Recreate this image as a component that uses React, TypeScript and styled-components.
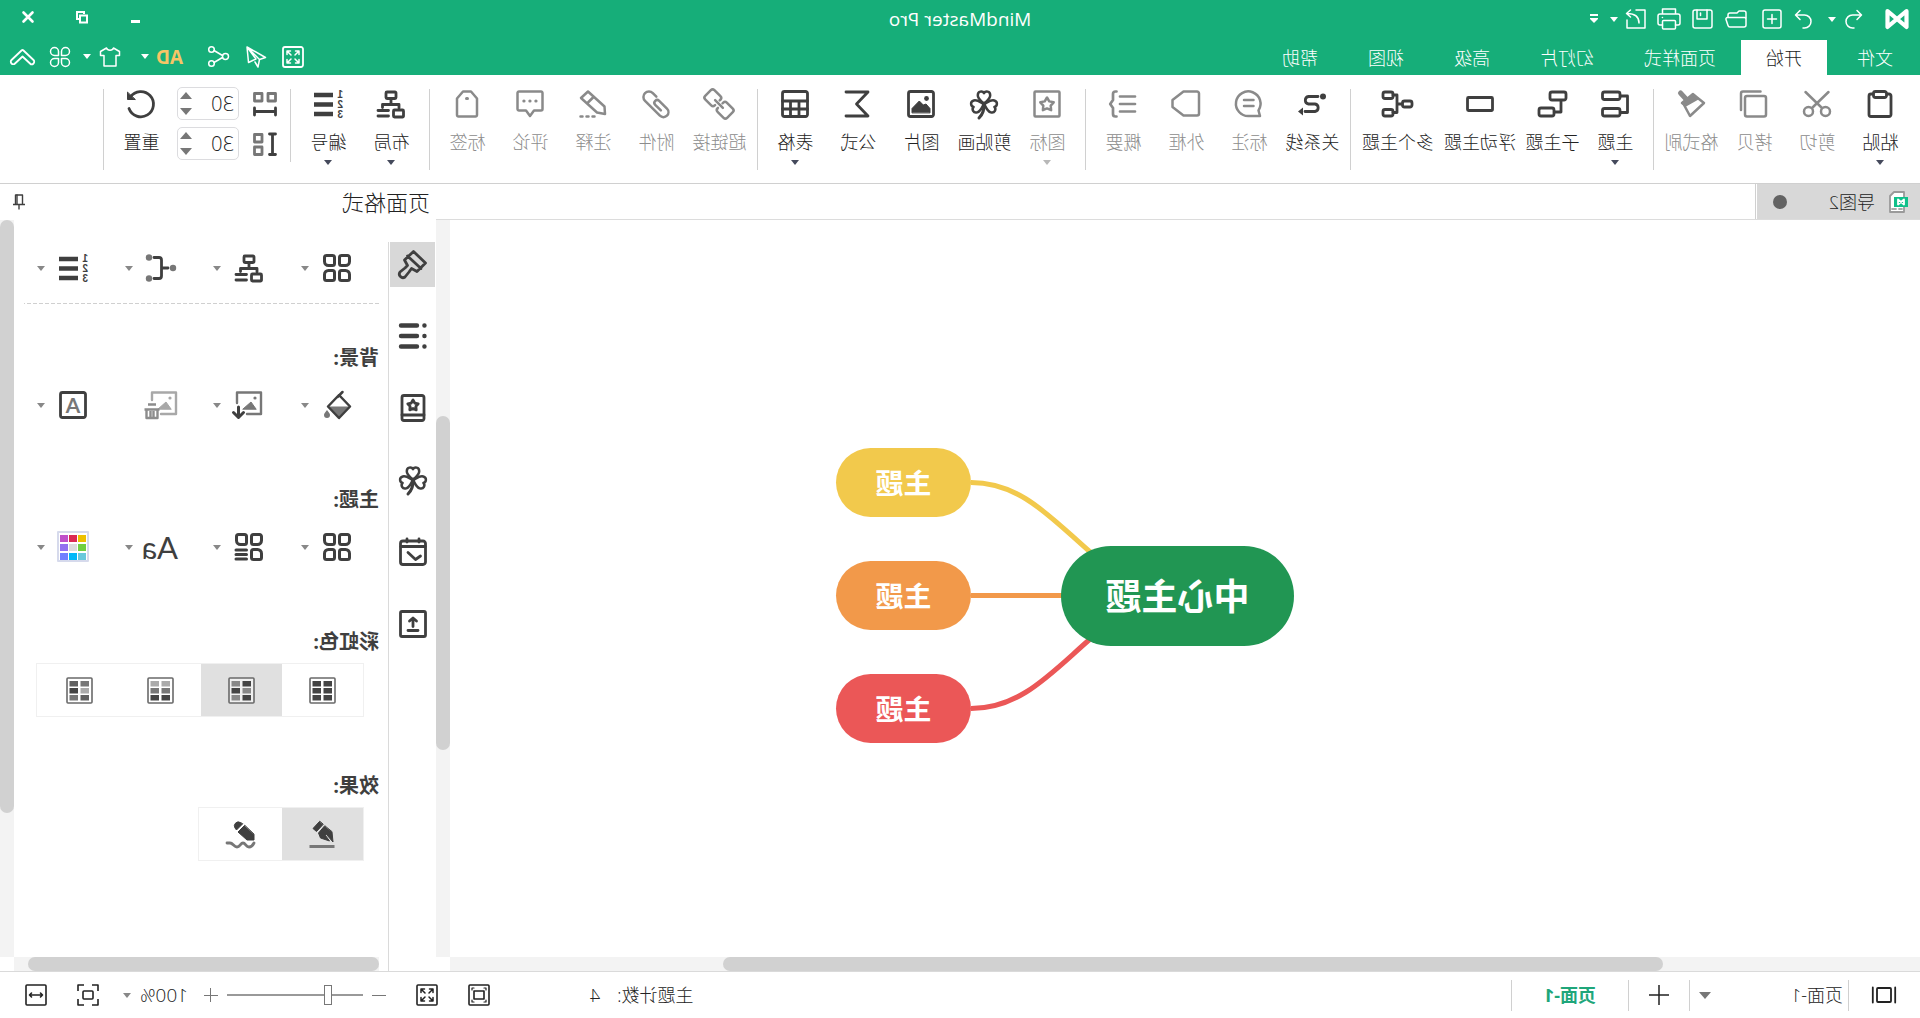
import React from 'react';
import styled, { createGlobalStyle, css } from 'styled-components';

const FONT = '"Open Sans", "Noto Sans CJK SC", sans-serif';
const C = {
  green: '#16ae79',
  ink: '#3f3f3f',
  mid: '#777777',
  faint: '#8a8a8a',
  line: '#d0d0d0',
  track: '#f3f3f3',
  thumb: '#d1d1d1',
};

const GlobalStyle = createGlobalStyle`
  * { box-sizing: border-box; }
  body { margin: 0; background: #fff; overflow: hidden; }
  button, input, select { font: inherit; color: inherit; margin: 0; padding: 0; border: 0; background: none; }
  button { cursor: pointer; }
`;

/* The whole window is shown reversed, left to right. */
const Shell = styled.div`
  display: flex;
  flex-direction: column;
  height: 100vh;
  transform: scaleX(-1);
  font-family: ${FONT};
  font-size: 18px;
  font-weight: 300;
  line-height: 24px;
  color: #222;
  background: #fff;
`;

/* ---------- shared parts ---------- */

const Svg = styled.svg`
  display: block;
  flex: none;
  overflow: visible;
  fill: none;
  stroke: currentColor;
  stroke-linecap: round;
  stroke-linejoin: round;
`;

type IconProps = { w?: number; h?: number; sw?: number; children: React.ReactNode };
const Icon = ({ w = 28, h, sw = 2.8, children }: IconProps) => (
  <Svg width={w} height={h ?? w} viewBox={`0 0 ${w} ${h ?? w}`} strokeWidth={sw} aria-hidden="true">
    {children}
  </Svg>
);

const Arrow = styled.i<{ $color?: string; $size?: number }>`
  display: block;
  flex: none;
  width: ${p => (p.$size ?? 4) * 2}px;
  border: ${p => p.$size ?? 4}px solid transparent;
  border-top: ${p => (p.$size ?? 4) + 1}px solid ${p => p.$color ?? 'currentColor'};
  border-bottom: 0;
`;

const IconButton = styled.button<{ $gap?: number }>`
  display: flex;
  align-items: center;
  flex: none;
  margin-left: ${p => p.$gap ?? 0}px;
`;

/* ---------- header ---------- */

const Header = styled.header`
  flex: none;
  background: ${C.green};
  color: #fff;
`;

const TitleBar = styled.div`
  display: grid;
  grid-template-columns: 1fr auto 1fr;
  align-items: center;
  height: 40px;
  padding-bottom: 2px;
`;

const QuickAccess = styled.div`
  display: flex;
  align-items: center;
  padding-left: 11px;
`;

const AppTitle = styled.h1`
  margin: 0;
  font-size: 19px;
  font-weight: 400;
  line-height: 24px;
`;

const WindowControls = styled.div`
  display: flex;
  justify-content: flex-end;
  padding: 0 1px 4px 0;
`;

const WindowButton = styled.button`
  display: flex;
  align-items: center;
  justify-content: center;
  width: 54px;
  height: 34px;
`;

const MenuRow = styled.div`
  display: flex;
  height: 35px;
`;

const FileButton = styled.button`
  width: 90px;
  margin-right: 3px;
`;

const MenuTab = styled.button<{ $active?: boolean }>`
  padding: 0 25px;
  ${p => p.$active && css`background: #fff; color: #222;`}
`;

const MenuTools = styled.div`
  display: flex;
  align-items: center;
  margin-left: auto;
  padding: 0 10px 2px 0;
`;

const AdLabel = styled.span`
  width: 27px;
  margin-right: 7px;
  color: #f7c566;
  font: 700 19px/24px "Open Sans", sans-serif;
`;

/* ---------- ribbon ---------- */

const Ribbon = styled.div`
  display: flex;
  align-items: flex-start;
  flex: none;
  height: 109px;
  padding: 14px 0 0 8px;
  border-bottom: 1px solid ${C.line};
`;

const Separator = styled.div<{ $h?: number }>`
  flex: none;
  width: 1px;
  height: ${p => p.$h ?? 81}px;
  margin: 0 6px;
  background: ${C.line};
`;

const RibbonButton = styled.button<{ $wide?: boolean }>`
  display: flex;
  flex-direction: column;
  align-items: center;
  flex: none;
  width: ${p => (p.$wide ? 82 : 63)}px;
  padding-top: 1px;
  white-space: nowrap;
  color: ${C.ink};
  &:disabled { color: ${C.faint}; cursor: default; }
`;

const RibbonLabel = styled.span`
  margin: 12px 0 6px;
  color: #222;
  button:disabled & { color: #8c8c8c; }
`;

const Spacing = styled.div`
  display: grid;
  grid-template-columns: 24px 62px;
  align-items: center;
  gap: 7px 14px;
  margin: -2px 0 0 7px;
  color: ${C.ink};
`;

const Spinner = styled.div`
  display: flex;
  align-items: center;
  height: 33px;
  border: 1px solid #dcdcdf;
  border-radius: 5px;
  input {
    width: 46px;
    padding-left: 4px;
    color: #222;
    font-size: 20px;
    line-height: 24px;
    outline: 0;
  }
`;

const SpinButtons = styled.div`
  display: flex;
  flex-direction: column;
  gap: 9px;
  color: ${C.mid};
  button { display: block; line-height: 0; }
`;

const ResetSlot = styled.div`
  padding: 0 0 0 4px;
  display: flex;
`;

/* ---------- work area ---------- */

const Workspace = styled.main`
  display: flex;
  flex: 1;
  min-height: 0;
`;

const DocArea = styled.section`
  display: flex;
  flex-direction: column;
  flex: 1;
  min-width: 0;
`;

const DocTabs = styled.div`
  display: flex;
  flex: none;
  height: 36px;
  border-bottom: 1px solid #dcdcdc;
`;

const DocTab = styled.button`
  display: flex;
  align-items: center;
  width: 163px;
  padding: 0 16px 0 12px;
  background: #d8d8d8;
`;

const DocName = styled.span`
  margin: 0 auto 0 13px;
`;

const Modified = styled.i`
  width: 14px;
  height: 14px;
  border-radius: 50%;
  background: #636363;
`;

const TabEdge = styled.i`
  width: 2px;
  border-right: 1px solid ${C.line};
`;

const CanvasRow = styled.div`
  display: flex;
  flex: 1;
  min-height: 0;
`;

const Canvas = styled.div`
  position: relative;
  flex: 1;
  overflow: hidden;
`;

const Track = styled.div<{ $row?: boolean; $split: [number, number, number] }>`
  display: grid;
  flex: none;
  background: ${C.track};
  ${p => {
    const parts = p.$split.map(n => `${n}fr`).join(' ');
    return p.$row
      ? css`height: 14px; grid-template-columns: ${parts};`
      : css`width: 14px; grid-template-rows: ${parts};`;
  }}
`;

const Thumb = styled.div<{ $row?: boolean }>`
  ${p => (p.$row ? 'grid-column: 2;' : 'grid-row: 2;')}
  border-radius: 7px;
  background: ${C.thumb};
`;

const HScrollRow = styled.div<{ $before?: number; $after?: number }>`
  flex: none;
  padding: 0 ${p => p.$after ?? 0}px 0 ${p => p.$before ?? 0}px;
`;

const Links = styled.svg`
  position: absolute;
  left: 626px;
  top: 220px;
  width: 460px;
  height: 310px;
  fill: none;
  stroke-width: 5;
`;

const Node = styled.div<{ $x: number; $y: number; $root?: boolean; $color: string }>`
  position: absolute;
  left: ${p => p.$x}px;
  top: ${p => p.$y}px;
  display: flex;
  align-items: center;
  justify-content: center;
  width: ${p => (p.$root ? 233 : 135)}px;
  height: ${p => (p.$root ? 100 : 69)}px;
  padding-top: ${p => (p.$root ? 2 : 0)}px;
  border-radius: 50px;
  background: ${p => p.$color};
  color: #fff;
  font-size: ${p => (p.$root ? 36 : 28)}px;
  font-weight: 700;
  line-height: 40px;
`;

/* ---------- format panel ---------- */

const Panel = styled.aside`
  display: flex;
  flex-direction: column;
  flex: none;
  width: 436px;
  color: ${C.ink};
`;

const PanelHead = styled.div`
  display: flex;
  align-items: center;
  justify-content: space-between;
  flex: none;
  height: 36px;
  padding: 0 13px 0 6px;
  h2 { margin: 0; color: #222; font-size: 22px; font-weight: inherit; line-height: 28px; }
`;

const PanelBody = styled.div`
  display: flex;
  flex: 1;
  min-height: 0;
`;

const Rail = styled.nav`
  display: flex;
  flex-direction: column;
  gap: 27px;
  flex: none;
  width: 48px;
  margin-top: 22px;
  padding-left: 1px;
  border-right: 1px solid #dadada;
`;

const RailButton = styled.button<{ $active?: boolean }>`
  display: flex;
  align-items: center;
  justify-content: center;
  width: 45px;
  height: 45px;
  padding: 0 1px 1px 0;
  background: ${p => (p.$active ? '#d8d8d8' : 'none')};
`;

const PanelMain = styled.div`
  display: flex;
  flex-direction: column;
  flex: 1;
`;

const PanelScroll = styled.div`
  display: flex;
  flex: 1;
  min-height: 0;
`;

const Settings = styled.div`
  flex: 1;
  overflow: hidden;
  padding: 34px 10px 0 9px;
`;

const ToolRow = styled.div`
  display: grid;
  grid-template-columns: repeat(4, 88px);
  height: 28px;
`;

const ToolButton = styled.button`
  display: flex;
  align-items: center;
  gap: 14px;
  padding-left: 28px;
  white-space: nowrap;
  &:disabled { cursor: default; }
`;

const Dashes = styled.div`
  height: 1px;
  margin: 21px 0 40px;
  background: repeating-linear-gradient(90deg, ${C.line} 0 4px, transparent 4px 6px);
`;

const Section = styled.section<{ $end: number }>`
  padding-bottom: ${p => p.$end}px;
`;

const Heading = styled.h3<{ $gap: number }>`
  margin: 0 0 ${p => p.$gap}px;
  font-size: 20px;
  font-weight: 700;
  line-height: 28px;
`;

const Segments = styled.div`
  display: inline-flex;
  vertical-align: top;
  margin-left: 15px;
  padding-right: 2px;
  border: 1px solid #f0f0f0;
`;

const Segment = styled.button<{ $active?: boolean }>`
  display: flex;
  align-items: center;
  justify-content: center;
  width: 81px;
  height: 52px;
  background: ${p => (p.$active ? '#e0e0e0' : 'none')};
`;

const FontSample = styled.span`
  width: 28px;
  margin-left: -3px;
  margin-right: 3px;
  font: 400 31px/28px Lato, sans-serif;
`;

/* ---------- status bar ---------- */

const StatusBar = styled.footer`
  display: flex;
  align-items: center;
  flex: none;
  height: 47px;
  padding-right: 25px;
  border-top: 1px solid #dadada;
`;

const StatusDivider = styled.i`
  width: 1px;
  height: 31px;
  background: ${C.line};
`;

const StatusCell = styled.button<{ $w: number; $active?: boolean }>`
  display: flex;
  align-items: center;
  justify-content: center;
  width: ${p => p.$w}px;
  height: 46px;
  ${p => p.$active && css`color: #1fa67a; font-weight: 700;`}
`;

const Picker = styled.label<{ $w: number; $pad?: number; $size?: number }>`
  display: flex;
  align-items: center;
  width: ${p => p.$w}px;
  padding: 0 ${p => p.$pad ?? 0}px 0 ${p => (p.$pad ? 5 : 0)}px;
  font-size: ${p => p.$size ?? 18}px;
  select { flex: 1; min-width: 0; appearance: none; outline: 0; }
`;

const Counter = styled.div`
  display: flex;
  gap: 17px;
  margin: 0 100px 0 auto;
`;

const Zoom = styled.div`
  display: flex;
  align-items: center;
  gap: 9px;
  margin: 0 16px 0 30px;
  color: ${C.mid};
`;

const Slider = styled.input`
  appearance: none;
  width: 136px;
  height: 20px;
  background: linear-gradient(#999, #999) center / 100% 2px no-repeat;
  &::-webkit-slider-thumb {
    appearance: none;
    width: 8px;
    height: 20px;
    border: 1px solid #777;
    background: #fff;
  }
`;

/* ---------- drawings ---------- */

const star = (cx: number, cy: number, r: number) =>
  Array.from({ length: 10 }, (_, i) => {
    const a = -Math.PI / 2 + (i * Math.PI) / 5;
    const k = i % 2 ? r * 0.55 : r;
    return `${(cx + k * Math.cos(a)).toFixed(1)},${(cy + k * Math.sin(a)).toFixed(1)}`;
  }).join(' ');

const heart = 'M0 0C-2-2.500-6.200-5-6.200-8.800C-6.200-13-1.500-13.500 0-10.800C1.500-13.500 6.200-13 6.200-8.800C6.200-5 2-2.500 0 0Z';

const Clover = () => (
  <Icon sw={2.5}>
    <path d={heart} transform="translate(14 14)" />
    <path d={heart} transform="translate(14 14) rotate(106)" />
    <path d={heart} transform="translate(14 14) rotate(-106)" />
    <path d="M14 13c-.5 6 1 11 5 15" strokeWidth="3" />
  </Icon>
);

const TreeIcon = () => (
  <Icon>
    <rect x="9" y="2" width="10" height="6.500" rx="1" />
    <path d="M14 9v5M6 18v-3.500h16.500v3M16.500 20.500H27M16.500 26H27" />
    <rect x="1.500" y="20" width="10" height="7" rx="1" />
  </Icon>
);

const NumberIcon = () => (
  <Icon sw={4.6}>
    <path d="M9 5h19M9 14.500h19M9 24h19" strokeLinecap="butt" />
    <g fill="currentColor" stroke="none" fontFamily="Liberation Sans Narrow, Liberation Sans, sans-serif" fontSize="10" fontWeight="700">
      <text x="-1" y="8">1</text>
      <text x="-1" y="18">2</text>
      <text x="-1" y="28">3</text>
    </g>
  </Icon>
);

const petals = [
  'M3.500 1.500h6a2 2 0 0 1 2 2v6a2 2 0 0 1-2 2h-4a4 4 0 0 1-4-4v-4a2 2 0 0 1 2-2z',
  'M18.500 1.500h6a2 2 0 0 1 2 2v4a4 4 0 0 1-4 4h-4a2 2 0 0 1-2-2v-6a2 2 0 0 1 2-2z',
  'M5.500 16.500h4a2 2 0 0 1 2 2v6a2 2 0 0 1-2 2h-6a2 2 0 0 1-2-2v-4a4 4 0 0 1 4-4z',
  'M18.500 16.500h4a4 4 0 0 1 4 4v4a2 2 0 0 1-2 2h-6a2 2 0 0 1-2-2v-6a2 2 0 0 1 2-2z',
];

const Petals = ({ list }: { list?: boolean }) => (
  <Icon sw={3}>
    {petals.filter((_, i) => !(list && i === 3)).map(d => <path key={d} d={d} />)}
    {list && <path d="M16.500 17H27M16.500 21.500H27M16.500 26H27" />}
  </Icon>
);

const mountain = '23,22.5 23,18.500 15.700,11 11.700,15 9,14 5,18.500 5,22.500';

const PictureCorner = ({ faint }: { faint?: boolean }) => (
  <Icon sw={2.4}>
    <g transform={faint ? 'translate(-3 0)' : undefined}>
      <g color={faint ? '#a8a8a8' : C.mid} stroke="currentColor">
        <path d={faint ? 'M17 23H2V1.500h24V9' : 'M16 23H2V1.500h24V12'} />
        <polygon points="7,18 12,11 20,18" fill="currentColor" strokeWidth="1" />
        <circle cx="8" cy="7" r="1.600" fill="currentColor" stroke="none" />
      </g>
      {faint ? (
        <g stroke="#8c8c8c" strokeLinecap="butt">
          <path d="M18.500 18.500h15M22 13.500h8M20.500 19v8h11v-8M24.500 20v6M27.500 20v6" />
        </g>
      ) : (
        <path d="M24.500 16v10M19.500 21.500l5 5 5-5" strokeWidth="3" />
      )}
    </g>
  </Icon>
);

const Grid = ({ cols }: { cols: [string[], string[]] }) => (
  <Icon w={27} sw={1.6}>
    <rect x="1" y="1" width="25" height="25" rx="1" stroke="#6a6a6a" fill="#fff" fillOpacity="0.500" />
    {cols.map((col, c) =>
      col.map((fill, r) => (
        <rect key={`${c}${r}`} x={4 + c * 11} y={4 + r * 7} width="8.500" height="5.500" fill={fill} stroke="none" />
      )),
    )}
  </Icon>
);

const palette = [
  ['#edc000', '#dc2a54', '#c04fc9'],
  ['#70d040', '#dcdcdc', '#9370f0'],
  ['#68c8dc', '#00b8f8', '#7080ff'],
];

const Expand = () => (
  <path
    d="M9 9L5.500 5.500M5 8.500V5h3.500M13 9l3.500-3.500M17 8.500V5h-3.500M9 13l-3.500 3.500M5 13.500V17h3.500M13 13l3.500 3.500M17 13.500V17h-3.500"
    strokeWidth="1.500"
  />
);

/* ---------- data ---------- */

type Tool = { label: string; icon: React.ReactNode; off?: boolean; menu?: boolean; wide?: boolean };

const groups: Tool[][] = [
  [
    { label: '粘贴', menu: true, icon: <Icon><rect x="3" y="4" width="22" height="22.500" rx="2" /><rect x="7.500" y="1.500" width="13" height="6" rx="2" fill="#fff" /></Icon> },
    { label: '剪切', off: true, icon: <Icon sw={2.5}><path d="M2.500 2l16.500 16M25.500 2L9 18" /><circle cx="5.500" cy="21.500" r="4.500" /><circle cx="22.500" cy="21.500" r="4.500" /></Icon> },
    { label: '拷贝', off: true, icon: <Icon sw={2.5}><rect x="2" y="6" width="21" height="20.500" rx="2" /><path d="M7.500 1.500H25a2 2 0 0 1 2 2V20" /></Icon> },
    { label: '格式刷', off: true, icon: <Icon sw={2.5}><path d="M24.500 3L19 9" strokeWidth="5" /><polygon points="11,5 1,13 15,26 22,13" /><polygon points="12,4 8,9 19.500,15.500 23,13" fill="currentColor" /></Icon> },
  ],
  [
    { label: '主题', menu: true, icon: <Icon><rect x="9" y="2" width="17.500" height="7.500" rx="2" /><rect x="9" y="18.500" width="17.500" height="7.500" rx="2" /><path d="M8 6H1.500v16.500H8" /></Icon> },
    { label: '子主题', icon: <Icon><rect x="0" y="2" width="16" height="8" rx="2" /><path d="M5 11v11h6" /><rect x="12" y="18" width="15" height="8" rx="2" /></Icon> },
    { label: '浮动主题', wide: true, icon: <Icon><rect x="1.500" y="7.500" width="25" height="13" rx="1" /></Icon> },
    { label: '多个主题', wide: true, icon: <Icon><rect x="0" y="11" width="9.500" height="6" rx="2" /><path d="M10 14h5M19 5h-4v17.500h4" /><rect x="19" y="2" width="10" height="6.500" rx="2" /><rect x="19" y="19.500" width="10" height="6.500" rx="2" /></Icon> },
  ],
  [
    { label: '关系线', icon: <Icon><circle cx="3" cy="6.500" r="3" fill="currentColor" stroke="none" /><path d="M8 6.500h9.500a3.800 3.800 0 0 1 0 7.500H11a3.800 3.800 0 0 0 0 7.500h10" /><polygon points="28,21.500 23,17.500 23,25.500" fill="currentColor" stroke="none" /></Icon> },
    { label: '标注', off: true, icon: <Icon sw={2.5}><path d="M14 26H3l1.500-5.500A12.300 12.300 0 1 1 14 26zM9.500 10h9.500M9.500 16h9.500" /></Icon> },
    { label: '外框', off: true, icon: <Icon sw={2.5}><path d="M3 1.500h13.500l11 8.500v7l-11 8.500H3a2 2 0 0 1-2-2v-20a2 2 0 0 1 2-2z" /></Icon> },
    { label: '概要', off: true, icon: <Icon sw={2.7}><path d="M2 6.500h15M2 14h15M2 21.500h15M20.500 1.500h1a2.500 2.500 0 0 1 2.500 2.500v6l2.800 4-2.800 4v6a2.500 2.500 0 0 1-2.500 2.500h-1" /></Icon> },
  ],
  [
    { label: '图标', off: true, menu: true, icon: <Icon sw={2.5}><rect x="1.500" y="1.500" width="25" height="25" rx="1" /><polygon points={star(14, 14.5, 7)} /></Icon> },
    { label: '剪贴画', icon: <Clover /> },
    { label: '图片', icon: <Icon><rect x="1.500" y="1.500" width="25" height="25" rx="2" /><polygon points={mountain} fill="currentColor" strokeWidth="1" /><circle cx="8.500" cy="8.500" r="2.400" fill="currentColor" stroke="none" /></Icon> },
    { label: '公式', icon: <Icon><path d="M26 2H4l11.500 12L4 26h22" /></Icon> },
    { label: '表格', menu: true, icon: <Icon><rect x="1.500" y="1.500" width="25" height="25" rx="2" /><path d="M1.500 11h25M1.500 19h25M10 11v15M18.500 11v15" /></Icon> },
  ],
  [
    { label: '超链接', off: true, icon: <Icon sw={2.5}><g transform="rotate(-45 14 14)"><path d="M12 11v-1a2.500 2.500 0 0 0-2.500-2.500H1A2.500 2.500 0 0 0-1.500 10v8A2.500 2.500 0 0 0 1 20.500h8.500A2.500 2.500 0 0 0 12 18v-.5M16 11v-1a2.500 2.500 0 0 1 2.500-2.500H27a2.500 2.500 0 0 1 2.500 2.500v8a2.500 2.500 0 0 1-2.500 2.500h-8.500A2.500 2.500 0 0 1 16 18v-.5M8.500 14h11" /></g></Icon> },
    { label: '附件', off: true, icon: <Icon sw={2.5}><path transform="rotate(-45 14 14)" d="M19 8.500h5a5.500 5.500 0 0 1 0 11H3a5 5 0 0 1 0-10h11a2.800 2.800 0 0 1 0 5.600H6" /></Icon> },
    { label: '注释', off: true, icon: <Icon sw={2.5}><path d="M19 1.500L26 8 10 22.500 2 24l.5-7.500zM13.500 7l6.500 6.500" /><path d="M12.500 26.500h15" strokeDasharray="2 4" /></Icon> },
    { label: '评论', off: true, icon: <Icon sw={2.5}><path d="M3 1.500h22a1.500 1.500 0 0 1 1.500 1.500v16a1.500 1.500 0 0 1-1.500 1.500h-7L14 26l-4-5.500H3A1.500 1.500 0 0 1 1.500 19V3A1.500 1.500 0 0 1 3 1.500z" /><path d="M8 11h.1M14 11h.1M20 11h.1" strokeWidth="3.200" /></Icon> },
    { label: '标签', off: true, icon: <Icon sw={2.5}><path d="M10 1.500h8l6 7V25a1.500 1.500 0 0 1-1.500 1.500h-17A1.500 1.500 0 0 1 4 25V8.500z" /><path d="M13.500 8.500h1" strokeWidth="3" /></Icon> },
  ],
  [
    { label: '布局', menu: true, icon: <TreeIcon /> },
    { label: '编号', menu: true, icon: <NumberIcon /> },
  ],
];

const menus = ['开始', '页面样式', '幻灯片', '高级', '视图', '帮助'];

const rail = [
  { name: '页面格式', icon: <Icon><path d="M13.500 1.500L1.500 13l8.500 8.500 5.500-3 2.500 3.500 4 5a3.600 3.600 0 0 0 5-5l-5-4-2.500-2.500 3-5.500zM19.500 6L6 18.500" /></Icon> },
  { name: '大纲', icon: <Icon sw={4.4}><path d="M10 3.500h16M10 14h16M10 24.500h16M2.500 3.500h.1M2.500 14h.1M2.500 24.500h.1" /></Icon> },
  { name: '图标库', icon: <Icon><rect x="3" y="1.500" width="22" height="25" rx="2" /><path d="M3 21h22" /><polygon points={star(14, 11.5, 5.500)} /></Icon> },
  { name: '剪贴画', icon: <Clover /> },
  { name: '任务', icon: <Icon><rect x="1.500" y="3" width="25" height="23.500" rx="2.500" /><path d="M2 8.500h24" strokeWidth="3" /><path d="M8 1v3M20 1v3M19 14.500l-7.500 7-5-3.500" /></Icon> },
  { name: '分享', icon: <Icon><rect x="1.500" y="1.500" width="25" height="25" rx="1.500" /><path d="M14 16.500V9M10.500 11L14 8l3.500 3M9 20.500h10" /></Icon> },
];

const grids: [string[], string[]][] = [
  [['#444', '#444', '#444'], ['#444', '#444', '#444']],
  [['#444', '#888', '#444'], ['#888', '#444', '#888']],
  [['#aaa', '#777', '#444'], ['#aaa', '#777', '#444']],
  [['#777', '#aaa', '#606060'], ['#606060', '#444', '#777']],
];

const nodes = [
  { y: 228, color: '#f2c94c' },
  { y: 341, color: '#f2994a' },
  { y: 454, color: '#eb5757' },
];

/* ---------- view ---------- */

const SpinBox = ({ name }: { name: string }) => (
  <Spinner>
    <input type="text" aria-label={name} defaultValue="30" />
    <SpinButtons>
      <button aria-label="增加"><Svg width="12" height="7" viewBox="0 0 12 7"><path d="M0 7L6 0l6 7z" fill="currentColor" stroke="none" /></Svg></button>
      <button aria-label="减少"><Svg width="12" height="7" viewBox="0 0 12 7"><path d="M0 0l6 7 6-7z" fill="currentColor" stroke="none" /></Svg></button>
    </SpinButtons>
  </Spinner>
);

const HeaderView = () => (
  <Header>
    <TitleBar>
      <QuickAccess>
        <Icon w={24} h={22} sw={4.2}><path d="M2.500 19V3l19 16V3L2.500 19z" /></Icon>
        <IconButton $gap={23} aria-label="撤销"><Icon w={18} sw={1.5}><path d="M5 .5L.5 5 5 9.500M1 5h8.500a6.500 6.500 0 0 1 0 13H8" /></Icon></IconButton>
        <IconButton $gap={8} aria-label="撤销记录"><Arrow /></IconButton>
        <IconButton $gap={15} aria-label="重做"><Icon w={18} sw={1.5}><path d="M13 .5L17.500 5 13 9.500M17 5H8.500a6.500 6.500 0 0 0 0 13H10" /></Icon></IconButton>
        <IconButton $gap={13} aria-label="新建"><Icon w={20} sw={1.5}><rect x="1" y="1" width="18" height="18" rx="2" /><path d="M10 5.500v9M5.500 10h9" /></Icon></IconButton>
        <IconButton $gap={14} aria-label="打开"><Icon w={23} h={18} sw={1.5}><path d="M2 8V3a2 2 0 0 1 2-2h5l2 2h7a2 2 0 0 1 2 2v2" /><path d="M2 15V9a1.500 1.500 0 0 1 1.500-1.500h17A1.500 1.500 0 0 1 22 9.500l-2 6a2 2 0 0 1-2 1.500H4a2 2 0 0 1-2-2z" /></Icon></IconButton>
        <IconButton $gap={12} aria-label="保存"><Icon w={21} h={20} sw={1.5}><rect x="1" y="1" width="19" height="18" rx="2" /><path d="M6 1v9h10V1M12.500 4v2.500" /></Icon></IconButton>
        <IconButton $gap={11} aria-label="打印"><Icon w={24} h={22} sw={1.5}><path d="M5.500 6V1h13v5M5.500 17H3a2 2 0 0 1-2-2V8a2 2 0 0 1 2-2h18a2 2 0 0 1 2 2v7a2 2 0 0 1-2 2h-2.500" /><rect x="5.500" y="12.500" width="13" height="8.500" rx="1" /><path d="M18.500 9.500h.1" /></Icon></IconButton>
        <IconButton $gap={11} aria-label="导出"><Icon w={21} h={20} sw={1.5}><path d="M10 1H1v18h18v-8M7 14c0-6 4-9.500 12-9.500M15.500 1l4 3.500-4 3.500" /></Icon></IconButton>
        <IconButton $gap={7} aria-label="导出选项"><Arrow /></IconButton>
        <IconButton $gap={12} aria-label="自定义工具栏"><Icon w={8} h={10} sw={2}><path d="M0 1h8" strokeLinecap="butt" /><path d="M0 4h8v1L4 9 0 5z" fill="currentColor" stroke="none" /></Icon></IconButton>
      </QuickAccess>
      <AppTitle>MindMaster Pro</AppTitle>
      <WindowControls>
        <WindowButton aria-label="最小化"><Icon w={9} h={12} sw={3}><path d="M0 10.500h9" strokeLinecap="butt" /></Icon></WindowButton>
        <WindowButton aria-label="还原"><Icon w={12} sw={2}><path d="M9 8h2V1H4v2" strokeLinecap="butt" strokeLinejoin="miter" /><path d="M1 11.500v-7h7v7z" strokeLinejoin="miter" /></Icon></WindowButton>
        <WindowButton aria-label="关闭"><Icon w={12} sw={2.6}><path d="M1.500 1.500l9 9M10.500 1.500l-9 9" /></Icon></WindowButton>
      </WindowControls>
    </TitleBar>
    <MenuRow>
      <FileButton>文件</FileButton>
      {menus.map((m, i) => <MenuTab key={m} $active={i === 0}>{m}</MenuTab>)}
      <MenuTools>
        <IconButton aria-label="全屏"><Icon w={20} sw={1.8}><rect x="0" y="0" width="20" height="20" rx="2" /><g transform="translate(-1 -1)"><Expand /></g></Icon></IconButton>
        <IconButton $gap={17} aria-label="发送"><Icon w={20} sw={1.5}><path d="M19 0L.5 10.500 6.500 12.500zM19 0l-1.500 15.500L10 12zM6.500 12.500L8 20l3-5" /></Icon></IconButton>
        <IconButton $gap={17} aria-label="分享"><Icon w={21} sw={1.5}><circle cx="3.500" cy="10.500" r="3" /><circle cx="17.500" cy="3.500" r="2.800" /><circle cx="17.500" cy="17.500" r="2.800" /><path d="M6.500 9.500l8.500-5M6.500 11.500l8.500 5" /></Icon></IconButton>
        <IconButton $gap={25}><AdLabel>AD</AdLabel><Arrow /></IconButton>
        <IconButton $gap={21} aria-label="皮肤"><Icon w={20} h={18} sw={1.5}><path d="M6.500 0L.5 3.500v4h3.500V18h12V7.500h3.500v-4L13.500 0c-1 3-6 3-7 0z" /></Icon></IconButton>
        <IconButton $gap={9} aria-label="皮肤选项"><Arrow /></IconButton>
        <IconButton $gap={13} aria-label="应用"><Icon w={20} sw={1.5}><path d="M8.500 8.500H4.500a4 4 0 1 1 4-4zM11.500 8.500v-4a4 4 0 1 1 4 4zM8.500 11.500v4a4 4 0 1 1-4-4zM11.500 11.500h4a4 4 0 1 1-4 4z" /></Icon></IconButton>
        <IconButton $gap={15} aria-label="收起功能区"><Icon w={25} h={16} sw={1.8}><path d="M11.500 1.500a1.500 1.500 0 0 1 2 0l10 9.500a2.400 2.400 0 0 1-3.500 3.500L12.500 7.500 5 14.500A2.400 2.400 0 0 1 1.500 11z" /></Icon></IconButton>
      </MenuTools>
    </MenuRow>
  </Header>
);

const RibbonView = () => (
  <Ribbon>
    {groups.map((g, i) => (
      <React.Fragment key={i}>
        {g.map(t => (
          <RibbonButton key={t.label} $wide={t.wide} disabled={t.off}>
            {t.icon}
            <RibbonLabel>{t.label}</RibbonLabel>
            {t.menu && <Arrow $color={t.off ? '#b8b8b8' : '#454a5c'} />}
          </RibbonButton>
        ))}
        <Separator $h={i === groups.length - 1 ? 73 : 81} />
      </React.Fragment>
    ))}
    <Spacing>
      <Icon w={24}><g stroke={C.mid}><rect x="1.500" y="1.500" width="7.500" height="7.500" /><rect x="15" y="1.500" width="7.500" height="7.500" /></g><path d="M1.500 16v7M22.500 16v7M2 19.500h20" /></Icon>
      <SpinBox name="水平间距" />
      <Icon w={24}><g stroke={C.mid}><rect x="15" y="2.500" width="7.500" height="7.500" /><rect x="15" y="15" width="7.500" height="7.500" /></g><path d="M1.500 2h6M1.500 22.500h6M4.500 2v20" /></Icon>
      <SpinBox name="垂直间距" />
    </Spacing>
    <ResetSlot>
      <RibbonButton>
        <Icon><path d="M26 18.500A12.600 12.600 0 1 1 24.500 7" /><polygon points="27.500,2.500 27.500,9.500 20,9.500" fill="currentColor" strokeWidth="1" /></Icon>
        <RibbonLabel>重置</RibbonLabel>
      </RibbonButton>
      <Separator />
    </ResetSlot>
  </Ribbon>
);

const DocView = () => (
  <DocArea>
    <DocTabs>
      <DocTab>
        <Icon w={20} h={22} sw={1.8}>
          <path d="M4 1h10l4 4v16H4z" stroke="#9a9a9a" fill="#fff" />
          <path d="M6 7h3M6 13h4M6 18h3M12 18h4" stroke="#aaa" />
          <rect x="0" y="6" width="14" height="10" fill="#0fc08a" stroke="none" />
          <path d="M4 13.500v-5l6 5v-5l-6 5z" stroke="#fff" />
        </Icon>
        <DocName>导图2</DocName>
        <Modified />
      </DocTab>
      <TabEdge />
    </DocTabs>
    <CanvasRow>
      <Canvas>
        <Links viewBox="626 220 460 310">
          <path d="M949 262.500C900 262.500 870 297 831 331L800 358" stroke="#f2c94c" />
          <path d="M949 375.500H800" stroke="#f2994a" />
          <path d="M949 488.500C900 488.500 870 454 831 420L800 393" stroke="#eb5757" />
        </Links>
        <Node $root $x={626} $y={326} $color="#219653">中心主题</Node>
        {nodes.map(n => <Node key={n.y} $x={949} $y={n.y} $color={n.color}>主题</Node>)}
      </Canvas>
      <Track $split={[196, 334, 207]}><Thumb /></Track>
    </CanvasRow>
    <HScrollRow $after={14}>
      <Track $row $split={[257, 940, 273]}><Thumb $row /></Track>
    </HScrollRow>
  </DocArea>
);

const Tools = ({ items }: { items: { name: string; icon: React.ReactNode; off?: boolean }[] }) => (
  <ToolRow>
    {items.map(t => (
      <ToolButton key={t.name} aria-label={t.name} disabled={t.off}>
        {t.icon}
        {!t.off && <Arrow $color="#888" />}
      </ToolButton>
    ))}
  </ToolRow>
);

const PanelView = () => (
  <Panel>
    <PanelHead>
      <h2>页面格式</h2>
      <IconButton aria-label="固定"><Icon w={12} h={16} sw={1.4}><path d="M2.500 10V1h7v9M0 10.500h12M6 11v4.500" strokeLinecap="butt" /><path d="M8 1v9" /></Icon></IconButton>
    </PanelHead>
    <PanelBody>
      <Rail>
        {rail.map((r, i) => <RailButton key={r.name} aria-label={r.name} $active={i === 0}>{r.icon}</RailButton>)}
      </Rail>
      <PanelMain>
        <PanelScroll>
          <Settings>
            <Tools items={[
              { name: '主题样式', icon: <Petals /> },
              { name: '布局', icon: <TreeIcon /> },
              { name: '连线', icon: <Icon><circle cx="2" cy="14" r="3.200" fill={C.mid} stroke="none" /><path d="M7 14h6M21 3.500h-5a2.500 2.500 0 0 0-2.500 2.500v16a2.500 2.500 0 0 0 2.500 2.500h5" /><circle cx="26" cy="3.500" r="3.200" fill={C.mid} stroke="none" /><circle cx="26" cy="24.500" r="3.200" fill={C.mid} stroke="none" /></Icon> },
              { name: '编号', icon: <NumberIcon /> },
            ]} />
            <Dashes />
            <Section $end={67}>
              <Heading $gap={19}>背景:</Heading>
              <Tools items={[
                { name: '填充', icon: <Icon sw={2.5}><polygon points="2,15.500 22,15.500 12,26" fill={C.mid} stroke="none" /><path d="M12 4L23 15.500 12 27 1 15.500zM8.500 1l5 5" /><path d="M24 19c2 2.500 3 3.500 3 5a3 3 0 0 1-6 0c0-1.500 1-2.500 3-5z" fill={C.mid} stroke="none" /></Icon> },
                { name: '背景图片', icon: <PictureCorner /> },
                { name: '移除背景', icon: <PictureCorner faint />, off: true },
                { name: '水印', icon: <Icon><rect x="1.500" y="1.500" width="25" height="25" rx="2" /><text x="14" y="21.500" textAnchor="middle" fontFamily="Lato, sans-serif" fontSize="21" fontWeight="700" fill={C.mid} stroke="none">A</text></Icon> },
              ]} />
            </Section>
            <Section $end={67}>
              <Heading $gap={19}>主题:</Heading>
              <Tools items={[
                { name: '主题', icon: <Petals /> },
                { name: '主题列表', icon: <Petals list /> },
                { name: '字体', icon: <FontSample>Aa</FontSample> },
                { name: '颜色', icon: <Icon sw={2}><rect x="-1" y="-1" width="30" height="29" stroke="#d6daec" />{palette.map((row, r) => row.map((f, c) => <rect key={f} x={1 + c * 9} y={2 + r * 9} width="8" height="7" fill={f} stroke="none" />))}</Icon> },
              ]} />
            </Section>
            <Section $end={55}>
              <Heading $gap={7}>彩虹色:</Heading>
              <Segments>
                {grids.map((g, i) => <Segment key={i} aria-label={`彩虹色 ${i + 1}`} $active={i === 1}><Grid cols={g} /></Segment>)}
              </Segments>
            </Section>
            <Section $end={0}>
              <Heading $gap={7}>效果:</Heading>
              <Segments>
                <Segment $active aria-label="标准"><Icon w={28}><g fill="currentColor" strokeWidth="1"><path d="M16.500 1.500L23 8.500 19.500 11.500 13 4.500zM11.500 6L17.500 13l-2 5L6.500 21l4-5.500-1-1L3 22l1-10z" /></g><path d="M1.500 26.500h25" stroke={C.mid} strokeWidth="3" strokeLinecap="butt" /></Icon></Segment>
                <Segment aria-label="手绘"><Icon w={28}><g fill="currentColor" strokeWidth="1"><path d="M14.500 2.500a4 4 0 0 1 5.500 5.500l-1.500 2-6-6z" /><path d="M10.500 5.500L17 12 8 20H1V14.500z" /></g><path d="M28 23h-3c-3 0-4 4-7 4s-3.500-4-6-4-3 4-6 4-4-2-5-4" stroke={C.mid} /></Icon></Segment>
              </Segments>
            </Section>
          </Settings>
          <Track $split={[0, 593, 144]}><Thumb /></Track>
        </PanelScroll>
        <HScrollRow $before={9} $after={14}>
          <Track $row $split={[0, 351, 14]}><Thumb $row /></Track>
        </HScrollRow>
      </PanelMain>
    </PanelBody>
  </Panel>
);

const StatusView = () => (
  <StatusBar>
    <StatusCell $w={71} aria-label="页面视图"><Icon w={24} h={16} sw={1.8}><rect x="5" y="1" width="14" height="14" rx="1" /><path d="M.8.5v15M23.200.5v15" /></Icon></StatusCell>
    <StatusDivider />
    <Picker $w={158} $pad={9}>
      <select aria-label="页面"><option>页面-1</option></select>
      <Arrow $color={C.mid} $size={6} />
    </Picker>
    <StatusDivider />
    <StatusCell $w={60} aria-label="添加页面"><Icon w={20} sw={1.5}><path d="M10 0v20M0 10h20" strokeLinecap="butt" /></Icon></StatusCell>
    <StatusDivider />
    <StatusCell $w={116} $active>页面-1</StatusCell>
    <StatusDivider />
    <Counter><span>主题计数:</span><span>4</span></Counter>
    <IconButton aria-label="适应窗口"><Icon w={22} sw={1.6}><rect x="1" y="1" width="20" height="20" rx="1" /><rect x="6" y="7" width="10" height="8" /><path d="M4 6V4h2M16 4h2v2M4 16v2h2M16 18h2v-2" strokeWidth="1.200" /></Icon></IconButton>
    <IconButton $gap={30} aria-label="全屏"><Icon w={22} sw={1.6}><rect x="1" y="1" width="20" height="20" rx="1" /><Expand /></Icon></IconButton>
    <Zoom>
      <IconButton aria-label="缩小"><Icon w={14} sw={1}><path d="M0 7.500h14" strokeLinecap="butt" /></Icon></IconButton>
      <Slider type="range" aria-label="缩放" min={0} max={100} defaultValue={24} />
      <IconButton aria-label="放大"><Icon w={14} sw={1}><path d="M0 7.500h14M7.500 0v14" strokeLinecap="butt" /></Icon></IconButton>
    </Zoom>
    <Picker $w={65} $size={19}>
      <select aria-label="缩放比例"><option>100%</option></select>
      <Arrow $color="#888" />
    </Picker>
    <IconButton $gap={24} aria-label="适应页面"><Icon w={22} sw={1.6}><rect x="6" y="7" width="10" height="8" rx="1" /><path d="M1 7V1h6M15 1h6v6M1 15v6h6M15 21h6v-6" strokeLinecap="butt" /></Icon></IconButton>
    <IconButton $gap={30} aria-label="适应宽度"><Icon w={22} sw={1.6}><rect x="1" y="1" width="20" height="20" rx="1" /><path d="M4.500 11h13M6.500 9l-2 2 2 2M15.500 9l2 2-2 2" /></Icon></IconButton>
  </StatusBar>
);

export default function App() {
  return (
    <>
      <GlobalStyle />
      <Shell>
        <HeaderView />
        <RibbonView />
        <Workspace>
          <DocView />
          <PanelView />
        </Workspace>
        <StatusView />
      </Shell>
    </>
  );
}
